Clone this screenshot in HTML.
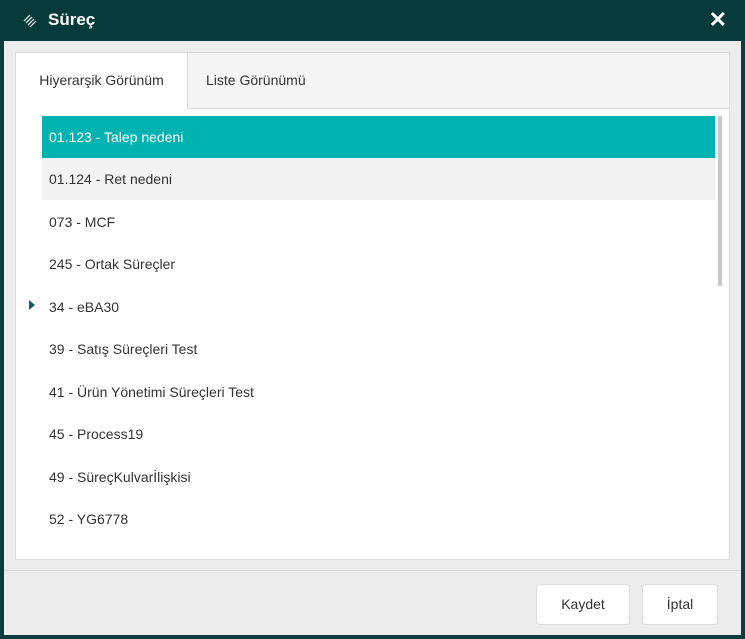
<!DOCTYPE html>
<html><head><meta charset="utf-8"><style>
body{margin:0;width:745px;height:639px;background:#0e3b3c;font-family:"Liberation Sans",sans-serif;position:relative;overflow:hidden}
.top{position:absolute;left:0;top:0;width:745px;height:41px;background:#073a3b}
.title{position:absolute;left:48px;top:10px;color:#fff;font-size:17px;font-weight:bold}
.x{position:absolute;right:18px;top:7px;color:#fff;font-size:22px;font-weight:bold}
.body{position:absolute;left:4px;top:41px;width:737px;height:594px;background:#ececec}
.panel{position:absolute;left:11px;top:11px;width:713px;height:506px;background:#fff;border:1px solid #dcdcdc}
.tabs{position:absolute;left:0;top:0;width:713px;height:55px;background:#f5f5f5;border-bottom:1px solid #dcdcdc}
.tab{position:absolute;top:0;height:55px;line-height:54px;font-size:14px;color:#333}
.t1{left:0;width:171px;background:#fff;border-right:1px solid #dcdcdc;height:56px;text-align:center}
.t2{left:190px}
.row{position:absolute;left:26px;width:673px;height:42px;line-height:42px;font-size:14px;color:#333;padding-left:7px;box-sizing:border-box}
.sb{position:absolute;left:702px;top:63px;width:4px;height:170px;background:#c8c8c8}
.foot{position:absolute;left:0;top:529px;width:737px;border-top:1px solid #dedede}
.btn{position:absolute;top:543px;height:39px;background:#fff;border:1px solid #ddd;border-radius:4px;font-size:14px;color:#333;text-align:center;line-height:39px}
</style></head><body>
<div class="top">
<svg style="position:absolute;left:22px;top:13px" width="16" height="16" viewBox="0 0 16 16"><g stroke="#fff" stroke-width="1.2"><line x1="2" y1="8" x2="8" y2="2"/><line x1="4" y1="10" x2="10" y2="4"/><line x1="6" y1="12" x2="12" y2="6"/><line x1="8" y1="14" x2="14" y2="8"/></g></svg>
<div class="title">Süreç</div><div class="x">✕</div></div>
<div class="body">
<div class="panel">
<div class="tabs"><div class="tab t1">Hiyerarşik Görünüm</div><div class="tab t2">Liste Görünümü</div></div>
<div class="row" style="top:63px;background:#00b3b0;color:#fff">01.123 - Talep nedeni</div>
<div class="row" style="top:105px;background:#f3f3f3">01.124 - Ret nedeni</div>
<div class="row" style="top:148px">073 - MCF</div>
<div class="row" style="top:190px">245 - Ortak Süreçler</div>
<div class="row" style="top:233px">34 - eBA30</div>
<div style="position:absolute;left:13px;top:247px;width:0;height:0;border-left:6px solid #1d5b5e;border-top:5px solid transparent;border-bottom:5px solid transparent"></div>
<div class="row" style="top:275px">39 - Satış Süreçleri Test</div>
<div class="row" style="top:318px">41 - Ürün Yönetimi Süreçleri Test</div>
<div class="row" style="top:360px">45 - Process19</div>
<div class="row" style="top:403px">49 - SüreçKulvarİlişkisi</div>
<div class="row" style="top:445px">52 - YG6778</div>
<div class="sb"></div>
</div>
<div class="foot"></div>
<div class="btn" style="left:532px;width:92px">Kaydet</div>
<div class="btn" style="left:638px;width:74px">İptal</div>
</div>
</body></html>
